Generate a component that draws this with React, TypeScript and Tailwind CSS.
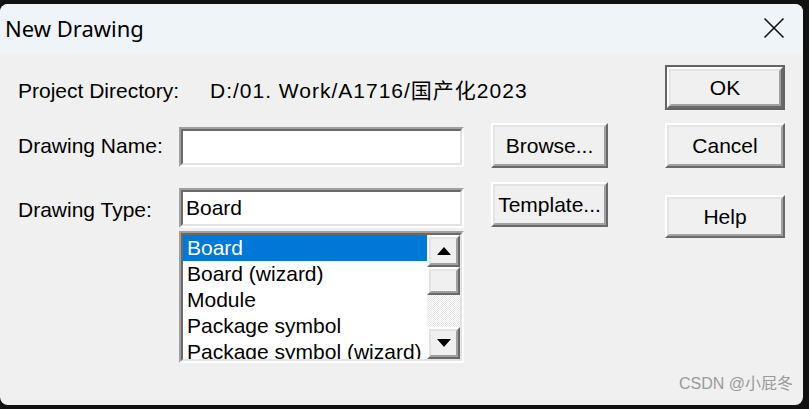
const sunken = "border-t-2 border-l-2 border-t-[#a0a0a0] border-l-[#a0a0a0] border-b-2 border-r-2 border-b-white border-r-white";
const sunkenInner = "border-t-2 border-l-2 border-t-[#696969] border-l-[#696969] border-b-2 border-r-2 border-b-[#e3e3e3] border-r-[#e3e3e3]";
const raised = "border-t-2 border-l-2 border-t-white border-l-white border-b-2 border-r-2 border-b-[#696969] border-r-[#696969]";
const raisedInner = "border-t-2 border-l-2 border-t-[#e3e3e3] border-l-[#e3e3e3] border-b-2 border-r-2 border-b-[#a0a0a0] border-r-[#a0a0a0]";

const Button = ({ label, w, h, isDefault }: { label: string; w: string; h: string; isDefault?: boolean }) => {
  const inner = (
    <div className={`${raised} w-full h-full`}>
      <div className={`${raisedInner} w-full h-full flex items-center justify-center bg-[#f0f0f0]`}>
        {label}
      </div>
    </div>
  );
  return (
    <div className={`${w} ${h} ${isDefault ? "border-2 border-[#646464]" : ""}`}>{inner}</div>
  );
};

const Field = ({ value, h }: { value?: string; h: string }) => (
  <div className={`${sunken} w-[285px] ${h}`}>
    <div className={`${sunkenInner} w-full h-full bg-white flex items-center pl-[3px]`}>{value}</div>
  </div>
);

const items = ["Board", "Board (wizard)", "Module", "Package symbol", "Package symbol (wizard)"];

const ScrollBtn = ({ up }: { up?: boolean }) => (
  <div className={`${raised} h-[32px] w-full`}>
    <div className={`${raisedInner} w-full h-full bg-[#f0f0f0] flex items-center justify-center`}>
      <svg width="14" height="8" viewBox="0 0 14 8">
        {up ? <polygon points="7,0 14,8 0,8" fill="#000" /> : <polygon points="0,0 14,0 7,8" fill="#000" />}
      </svg>
    </div>
  </div>
);

export default function App() {
  return (
    <div className="w-[809px] h-[409px] bg-[#111] pt-[4px] pr-[6px] pb-[4px] overflow-hidden">
      <div
        className="relative w-[803px] h-[401px] rounded-[8px] overflow-hidden bg-[#f0f0f0] flex flex-col text-[21px] text-black"
        style={{ fontFamily: '"Liberation Sans", "Noto Sans CJK SC", sans-serif' }}
      >
        <div className="h-[50px] shrink-0 bg-[#eff4f9] flex items-center justify-between pl-[5px] pr-[18px]">
          <span className="text-[22px] leading-none pb-[2px]" style={{ fontFamily: '"Noto Sans", sans-serif' }}>
            New Drawing
          </span>
          <svg width="22" height="22" viewBox="0 0 22 22" className="mt-[-2px]">
            <path d="M1.5 1.5 L20.5 20.5 M20.5 1.5 L1.5 20.5" stroke="#111" strokeWidth="1.6" fill="none" />
          </svg>
        </div>

        <div className="flex pl-[18px] pr-[18px]">
          <div className="flex flex-col">
            <div className="mt-[24px] h-[26px] flex items-center">
              <span className="w-[192px]">Project Directory:</span>
              <span className="tracking-[1px]">D:/01. Work/A1716/国产化2023</span>
            </div>

            <div className="mt-[19px] flex">
              <div className="w-[161px] h-[45px] flex items-center">Drawing Name:</div>
              <div className="mt-[4px]">
                <Field h="h-[40px]" />
              </div>
              <div className="ml-[27px]">
                <Button label="Browse..." w="w-[117px]" h="h-[45px]" />
              </div>
            </div>

            <div className="mt-[14px] flex">
              <div className="w-[161px] h-[56px] flex items-center">Drawing Type:</div>
              <div className="mt-[6px] flex flex-col">
                <Field value="Board" h="h-[40px]" />
                <div className={`${sunken} mt-[3px] w-[285px] h-[132px]`}>
                  <div className={`${sunkenInner} w-full h-full bg-white flex`}>
                    <div className="w-[244px] overflow-hidden flex flex-col">
                      {items.map((it, i) => (
                        <div
                          key={it}
                          className={`h-[26px] shrink-0 flex items-center pl-[4px] whitespace-nowrap ${
                            i === 0 ? "bg-[#0078d7] text-white" : ""
                          }`}
                        >
                          {it}
                        </div>
                      ))}
                    </div>
                    <div className="flex-1 flex flex-col">
                      <ScrollBtn up />
                      <div className={`${raised} h-[28px] w-full`}>
                        <div className={`${raisedInner} w-full h-full bg-[#f0f0f0]`} />
                      </div>
                      <div className="flex-1 bg-[image:repeating-conic-gradient(#ffffff_0%_25%,#e6e6e6_0%_50%)] bg-[length:2px_2px]" />
                      <ScrollBtn />
                    </div>
                  </div>
                </div>
              </div>
              <div className="ml-[27px]">
                <Button label="Template..." w="w-[117px]" h="h-[45px]" />
              </div>
            </div>
          </div>

          <div className="ml-auto flex flex-col">
            <div className="mt-[11px]">
              <Button label="OK" w="w-[120px]" h="h-[45px]" isDefault />
            </div>
            <div className="mt-[13px]">
              <Button label="Cancel" w="w-[120px]" h="h-[45px]" />
            </div>
            <div className="mt-[27px]">
              <Button label="Help" w="w-[120px]" h="h-[43px]" />
            </div>
          </div>
        </div>

        <div className="absolute right-[10px] bottom-[9px] text-[16px] text-[#9a9a9a]">CSDN @小屁冬</div>
      </div>
    </div>
  );
}
